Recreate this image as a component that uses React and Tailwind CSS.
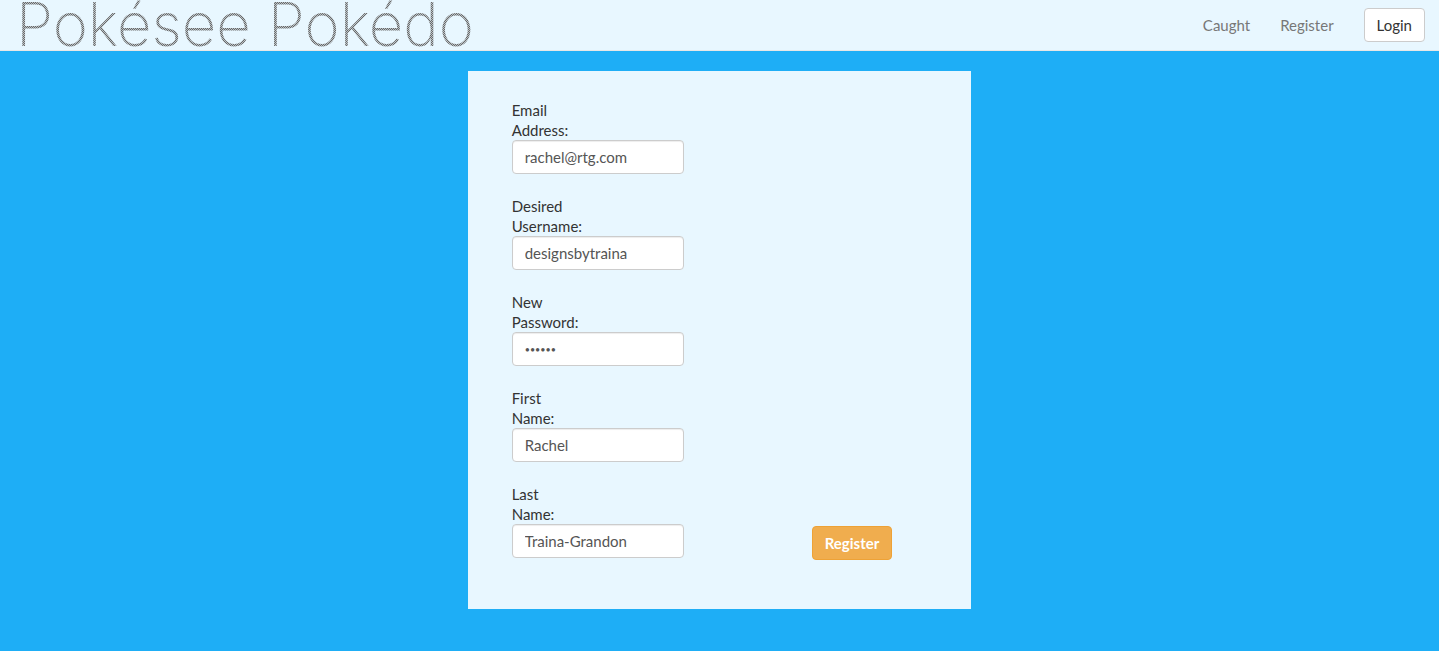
const fields = [
  { id: "email", lines: ["Email", "Address:"], type: "email", value: "rachel@rtg.com" },
  { id: "username", lines: ["Desired", "Username:"], type: "text", value: "designsbytraina" },
  { id: "password", lines: ["New", "Password:"], type: "password", value: "secret" },
  { id: "first-name", lines: ["First", "Name:"], type: "text", value: "Rachel" },
  { id: "last-name", lines: ["Last", "Name:"], type: "text", value: "Traina-Grandon" },
];

function Navbar() {
  return (
    <header className="flex h-[51px] items-center justify-between border-b border-[#e7e7e7] bg-[#e8f7ff] px-3.5">
      <a
        href="#home"
        className="self-start bg-[repeating-conic-gradient(#686868_0_25%,#b9c2c7_0_50%)] bg-size-[2px_2px] bg-clip-text pl-0.5 font-['Inter',sans-serif] text-[60px] leading-[48px] font-extralight whitespace-nowrap text-transparent"
      >
        Pokésee Pokédo
      </a>
      <nav className="flex items-center gap-[30px] text-[15px] leading-5 text-[#777]">
        <a href="#caught">Caught</a>
        <a href="#register">Register</a>
        <button type="button" className="h-[34px] rounded border border-[#ccc] bg-white px-3 text-[#333]">
          Login
        </button>
      </nav>
    </header>
  );
}

function Field({ id, lines, type, value }) {
  const textSize = type === "password" ? "text-[9px]" : "text-[15px]";
  return (
    <div className="w-[172px]">
      <label htmlFor={id} className="block text-[#333]">
        {lines[0]}
        <br />
        {lines[1]}
      </label>
      <input
        id={id}
        type={type}
        defaultValue={value}
        className={`block h-[34px] w-full rounded border border-[#ccc] bg-white px-3 text-[#555] shadow-[inset_0_1px_1px_rgba(0,0,0,0.075)] ${textSize}`}
      />
    </div>
  );
}

export default function App() {
  return (
    <div className="min-h-screen bg-[#1eaef6] font-['Lato',sans-serif] text-[15px] leading-5">
      <Navbar />
      <main className="pt-5 pb-10">
        <form className="mx-auto flex w-[35%] min-w-[440px] items-end gap-32 bg-[#e8f7ff] px-11 pt-[29px] pb-[49px]">
          <div className="flex flex-col gap-[22px] pb-0.5">
            {fields.map((field) => (
              <Field key={field.id} {...field} />
            ))}
          </div>
          <button
            type="submit"
            className="h-[34px] rounded border border-[#eea236] bg-[#f0ad4e] px-3 font-bold text-white"
          >
            Register
          </button>
        </form>
      </main>
    </div>
  );
}
